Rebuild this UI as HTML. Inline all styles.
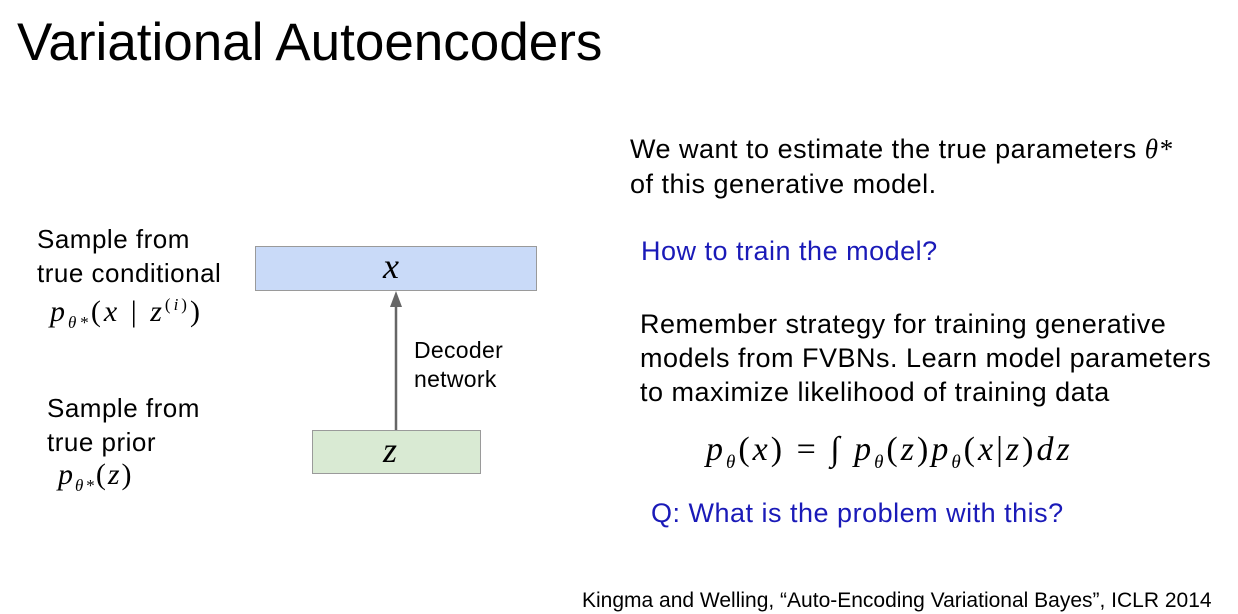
<!DOCTYPE html>
<html><head><style>
body{margin:0;width:1238px;height:614px;background:#fff;position:relative;overflow:hidden;font-family:"Liberation Sans",sans-serif;color:#000}
.t{position:absolute;white-space:nowrap;line-height:1}
.m{font-family:"Liberation Serif",serif;font-style:italic}
.n{font-style:normal}
.b{color:#1a1ab8}
.s{letter-spacing:0.5px}
</style></head><body>
<div class="t" style="left:17px;top:16px;font-size:53px">Variational Autoencoders</div>

<div class="t s" style="left:37px;top:222px;font-size:26px;line-height:34px">Sample from<br>true conditional</div>
<div class="t m" style="left:50px;top:296px;font-size:30px;letter-spacing:3px">p<sub style="font-size:17px">θ*</sub><span class="n">(</span>x <span class="n">|</span> z<sup style="font-size:17px"><span class="n">(</span>i<span class="n">)</span></sup><span class="n">)</span></div>
<div class="t s" style="left:47px;top:391px;font-size:26px;line-height:34px">Sample from<br>true prior</div>
<div class="t m" style="left:58px;top:460px;font-size:30px;letter-spacing:2px">p<sub style="font-size:17px">θ*</sub><span class="n">(</span>z<span class="n">)</span></div>

<div style="position:absolute;left:255px;top:246px;width:280px;height:43px;background:#c9daf8;border:1px solid #9a9a9a"></div>
<div class="t m" style="left:383px;top:248px;font-size:36px">x</div>
<div style="position:absolute;left:312px;top:430px;width:167px;height:42px;background:#d9ead3;border:1px solid #9a9a9a"></div>
<div class="t m" style="left:383px;top:432px;font-size:36px">z</div>
<svg style="position:absolute;left:0;top:0" width="1238" height="614"><line x1="396" y1="430" x2="396" y2="303" stroke="#666" stroke-width="2.5"/><polygon points="390,307 402,307 396,291" fill="#666"/></svg>
<div class="t" style="left:414px;top:336px;font-size:23px;line-height:29px;letter-spacing:0.3px">Decoder<br>network</div>

<div class="t s" style="left:630px;top:132px;font-size:27px;line-height:35px">We want to estimate the true parameters <span class="m">θ*</span><br>of this generative model.</div>
<div class="t b s" style="left:641px;top:238px;font-size:27px">How to train the model?</div>
<div class="t s" style="left:640px;top:307px;font-size:27px;line-height:34px">Remember strategy for training generative<br>models from FVBNs. Learn model parameters<br>to maximize likelihood of training data</div>
<div class="t m" style="left:706px;top:433px;font-size:34px;letter-spacing:3px">p<sub style="font-size:19px">θ</sub><span class="n">(</span>x<span class="n">) = ∫ </span>p<sub style="font-size:19px">θ</sub><span class="n">(</span>z<span class="n">)</span>p<sub style="font-size:19px">θ</sub><span class="n">(</span>x<span class="n">|</span>z<span class="n">)</span>dz</div>
<div class="t b s" style="left:651px;top:500px;font-size:27px">Q: What is the problem with this?</div>
<div class="t" style="left:582px;top:590px;font-size:21px">Kingma and Welling, “Auto-Encoding Variational Bayes”, ICLR 2014</div>
</body></html>
